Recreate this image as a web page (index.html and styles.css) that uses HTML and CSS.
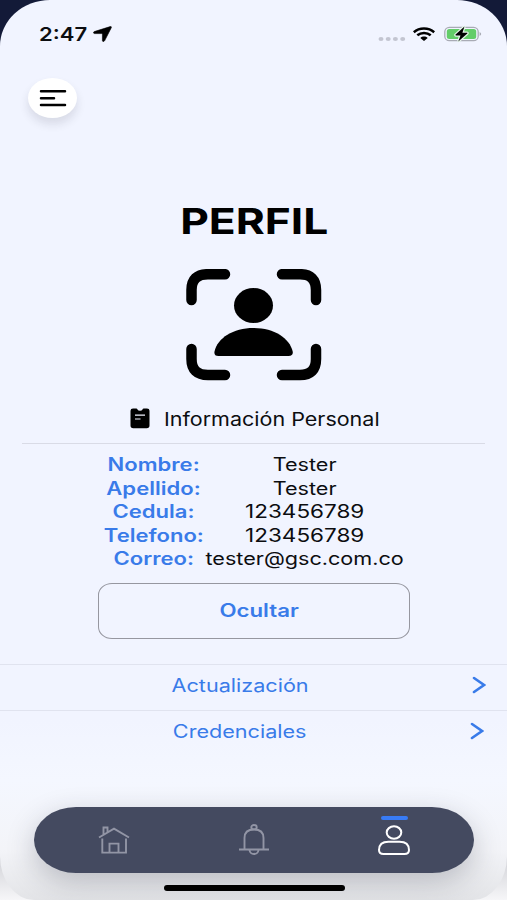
FILE: index.html
```html
<!DOCTYPE html>
<html lang="es">
<head>
<meta charset="utf-8">
<title>Perfil</title>
<link rel="stylesheet" href="styles.css">
</head>
<body>
<div class="screen">
  <header class="status">
    <div class="status-left">
      <span class="time"><span class="wide">2:47</span></span>
      <svg class="arrow" viewBox="0 0 19 16"><path d="M17.200 .6 1.300 5.600C.1 6.100.3 7.500 1.600 7.600H8.600c.6 0 .8.2.8.7v6.200c0 1.300 1.600 1.400 2.200.3L18.300 1.700C18.700.8 18 .3 17.200.6Z" stroke="#000" stroke-width=".6"/></svg>
    </div>
    <div class="status-right">
      <svg class="dots" viewBox="0 0 28 6"><g fill="#c3c5d1"><ellipse cx="3" cy="3" rx="2.500" ry="2"/><ellipse cx="10.200" cy="3" rx="2.500" ry="2"/><ellipse cx="17.400" cy="3" rx="2.500" ry="2"/><ellipse cx="24.700" cy="3" rx="2.500" ry="2"/></g></svg>
      <svg class="wifi" viewBox="0 0 22 14"><g fill="none" stroke="#000" stroke-width="2.500"><path d="M.8 5.200C6.400.3 15.600.3 21.200 5.200"/><path d="M4.300 8.300c3.800-3.200 9.600-3.200 13.400 0"/></g><path d="M7.300 10.900c2.100-1.800 5.300-1.800 7.400 0L11 14Z"/></svg>
      <svg class="battery" viewBox="0 0 38 16"><rect x=".8" y="1.300" width="33.400" height="13.400" rx="4.500" fill="none" stroke="#a9abb5" stroke-width="1.300"/><rect x="2.800" y="3" width="29.400" height="10" rx="2.500" fill="#63cd69"/><path d="M35.600 6v4q1.600-.8 1.600-2t-1.600-2Z" fill="#a9abb5"/><path d="M20.500 .5 11.600 8.600c-.4.4-.2.8.4.8h4.500l-2.200 6.100 9-8c.4-.4.1-.8-.4-.8h-4.500Z" stroke="#e4f4e8" stroke-width="2.500" paint-order="stroke"/></svg>
    </div>
  </header>

  <button class="menu" aria-label="Menú">
    <svg viewBox="0 0 28 18"><path d="M2 2.300h24M2 9.300H15M2 16h24" fill="none" stroke="#000" stroke-width="2.500" stroke-linecap="round"/></svg>
  </button>

  <h1 class="title"><span class="wide">PERFIL</span></h1>

  <svg class="avatar" viewBox="0 0 136 112">
    <g fill="none" stroke="#000" stroke-linecap="round" stroke-linejoin="round">
      <path stroke-width="10.500" d="M5.500 31V21Q5.500 5.200 22 5.200H39M96 5.200h18Q130 5.200 130 21V31M5.500 80V90q0 16 16.500 16H39M96 106h18q16 0 16-16V80"/>
    </g>
    <ellipse cx="67.500" cy="36.500" rx="19.500" ry="17.500"/>
    <path d="M32.500 87C29 87 28 85 28.500 82.500 31.500 69 47 59 67.500 59S103.500 69 106.700 82.500C107.200 85 106 87 102.500 87Z"/>
  </svg>

  <div class="section">
    <svg class="note" viewBox="0 0 20 21"><path d="M3 .5h3.200q1 0 1.300 1 .6 1.300 2.500 1.300t2.500-1.300q.3-1 1.300-1H17q2.500 0 2.500 2.200V17.500q0 2.800-2.800 2.800H3.300Q.5 20.300.5 17.500V2.700Q.5.5 3 .5Z"/><path d="M5 7.200h10M5 11h5.500" stroke="#f1f4ff" stroke-width="1.200"/></svg>
    <span class="section-title"><span class="wide">Información Personal</span></span>
  </div>

  <dl class="data">
    <dt><span class="wide">Nombre:</span></dt><dd><span class="wide">Tester</span></dd>
    <dt><span class="wide">Apellido:</span></dt><dd><span class="wide">Tester</span></dd>
    <dt><span class="wide">Cedula:</span></dt><dd><span class="wide digits">123456789</span></dd>
    <dt><span class="wide">Telefono:</span></dt><dd><span class="wide digits">123456789</span></dd>
    <dt><span class="wide">Correo:</span></dt><dd><span class="wide">tester@gsc.com.co</span></dd>
  </dl>

  <button class="hide"><span class="wide">Ocultar</span></button>

  <div class="links">
    <a class="link"><span class="wide">Actualización</span><svg viewBox="0 0 14 18"><path d="m2 2 10 7-10 7"/></svg></a>
    <a class="link second"><span class="wide">Credenciales</span><svg viewBox="0 0 14 18"><path d="m2 2 10 7-10 7"/></svg></a>
  </div>

  <nav class="tabs">
    <div class="tab">
      <svg class="house" viewBox="0 0 32 28"><g fill="none" stroke="#9295a5" stroke-width="1.900"><path d="M1 11.500 16 2.700l15 8.800M5.500 8.500V1.500h4V6M4.300 12.500V26.600H28V12.500M11.500 26.500V17.600h9v9"/></g></svg>
    </div>
    <div class="tab">
      <svg class="bell" viewBox="0 0 32 31"><g fill="none" stroke="#9295a5" stroke-width="1.900"><path d="M1 25.500h30M6.500 25.500V14q0-8.500 9.500-8.500T25.500 14v11.500"/><ellipse cx="16" cy="3.200" rx="2.700" ry="2.200"/><path d="M11.500 26q.5 4 4.500 4t4.500-4"/></g></svg>
    </div>
    <div class="tab active">
      <svg class="user" viewBox="0 0 34 30"><g fill="none" stroke="#fff" stroke-width="2"><ellipse cx="17" cy="7.500" rx="7.300" ry="6.200"/><path d="M11.500 16.700h11q9.500 0 9.500 8.300 0 4-4.500 4h-21Q2 29 2 25q0-8.300 9.500-8.300Z"/></g></svg>
    </div>
  </nav>
  <div class="home-bar"></div>
</div>
</body>
</html>
```
FILE: styles.css
```css
* { box-sizing: border-box; }
body {
  margin: 0;
  width: 507px;
  height: 900px;
  overflow: hidden;
  background: linear-gradient(#131a38 0, #131a38 80px, #d3d4d9 200px, #d3d4d9 860px, #f6f6f8 900px);
  font-family: Inter, "Liberation Sans", sans-serif;
  color: #0c0d10;
}
.screen {
  height: 900px;
  display: flex;
  flex-direction: column;
  align-items: center;
  overflow: hidden;
  border-radius: 50px 50px 34px 34px / 46px 46px 44px 44px;
  background: linear-gradient(#f1f4ff 0, #f1f4ff 720px, #f4f7ff 780px, #f3f4f8 850px, #e3e4e7 900px);
}
.wide {
  display: inline-block;
  white-space: nowrap;
  transform: scaleX(1.2);
}
.status {
  width: 100%;
  height: 68px;
  padding: 0 25px 0 39px;
  display: flex;
  justify-content: space-between;
  align-items: center;
}
.status-left, .status-right { display: flex; align-items: center; }
.time {
  width: 54px;
  font-size: 19px;
  font-weight: 600;
}
.time .wide { transform-origin: left; transform: scaleX(1.160); }
.arrow { width: 19px; height: 16px; }
.dots { width: 28px; height: 6px; margin: 9px 7px 0 0; }
.wifi { width: 22px; height: 14px; margin-right: 9px; }
.battery { width: 38px; height: 16px; }
.menu {
  width: 49px;
  height: 40px;
  margin: 10px 0 0 28px;
  padding: 0;
  align-self: flex-start;
  display: flex;
  align-items: center;
  justify-content: center;
  border: 0;
  border-radius: 50%;
  background: #fff;
  box-shadow: 0 6px 10px rgba(30, 30, 50, .12);
}
.menu svg { width: 28px; height: 18px; }
.title {
  margin: 79px 0 0 1px;
  height: 48px;
  line-height: 48px;
  font-size: 36px;
  font-weight: 700;
  color: #000;
}
.title .wide { transform: scaleX(1.230); }
.avatar { width: 136px; height: 112px; margin: 24px 0 0 1px; flex: none; }
.section {
  width: 463px;
  height: 50px;
  margin: 13px 0 0 -1px;
  padding-left: 108px;
  display: flex;
  align-items: center;
  border-bottom: 1px solid #d9dbe6;
}
.note { width: 20px; height: 21px; margin-right: 14px; }
.section-title { font-size: 18.500px; }
.section-title .wide { transform-origin: left; transform: scaleX(1.162); }
.data {
  margin: 9px 0 0 2px;
  display: grid;
  grid-template-columns: 100px 200px;
  grid-auto-rows: 23.600px;
  line-height: 23.600px;
  font-size: 18px;
}
.data dt, .data dd { margin: 0; display: flex; justify-content: center; }
.data dt { padding-right: 2px; color: #397be9; font-weight: 600; }
.data dt .wide { transform: scaleX(1.225); }
.data .digits { transform: scaleX(1.250); }
.hide {
  width: 312px;
  height: 56px;
  margin-top: 12px;
  flex: none;
  padding: 0 0 0 12px;
  border: 1.500px solid #9697a0;
  border-radius: 14px / 12px;
  background: none;
  color: #397be9;
  font: 600 18px Inter, "Liberation Sans", sans-serif;
}
.hide .wide { transform: scaleX(1.235); }
.links { width: 100%; margin-top: 25px; }
.link {
  height: 46px;
  padding: 0 21px 4px 0;
  border-top: 1px solid #e0e3ef;
  display: grid;
  grid-template-columns: 480px 6px;
  justify-items: center;
  align-items: center;
  color: #397be9;
  font-size: 18px;
}
.link svg {
  width: 14px;
  height: 18px;
  justify-self: end;
  fill: none;
  stroke: #397be9;
  stroke-width: 2.600;
  stroke-linecap: round;
}
.link.second svg { margin-right: 2px; }
.tabs {
  width: 440px;
  height: 66px;
  margin-top: 51px;
  flex: none;
  display: grid;
  grid-template-columns: 160px 120px 160px;
  border-radius: 42px / 33px;
  background: #444a60;
  box-shadow: 0 9px 28px rgba(40, 44, 60, .25);
}
.tab { display: flex; align-items: center; justify-content: center; position: relative; }
.active::before {
  content: "";
  position: absolute;
  top: 9px;
  left: 67px;
  width: 27px;
  height: 4px;
  border-radius: 2px;
  background: #387bf5;
}
.house { width: 32px; height: 28px; }
.bell { width: 32px; height: 31px; }
.user { width: 34px; height: 30px; }
.home-bar {
  width: 181px;
  height: 6px;
  margin: 12px 0 0 1px;
  flex: none;
  border-radius: 3px;
  background: #000;
}
```
